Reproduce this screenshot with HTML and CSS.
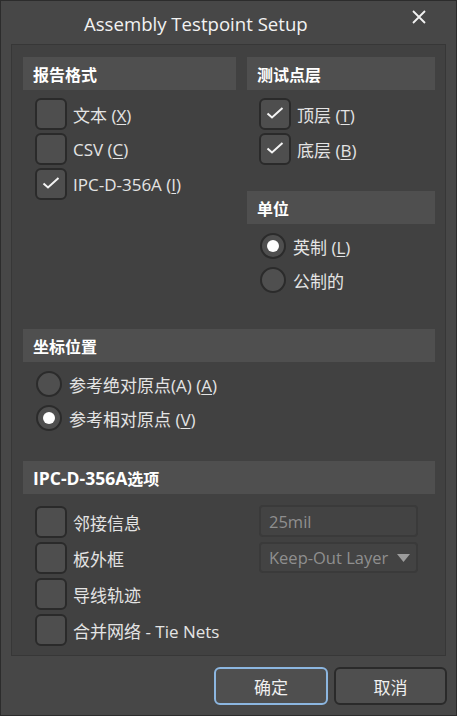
FILE: index.html
```html
<!DOCTYPE html>
<html lang="zh">
<head>
<meta charset="utf-8">
<title>Assembly Testpoint Setup</title>
<link rel="stylesheet" href="styles.css">
</head>
<body>
<div class="window">
  <div class="titlebar">
    <span class="title">Assembly Testpoint Setup</span>
    <span class="close"><svg width="14" height="14" viewBox="0 0 14 14"><path d="M1 1 L13 13 M13 1 L1 13" stroke="#f2f2f2" stroke-width="1.8" fill="none"/></svg></span>
  </div>
  <div class="panel">
    <div class="top">
      <div class="col">
        <div class="hdr">报告格式</div>
        <div class="list tight">
          <div class="opt"><span class="cb"></span><span>文本 (<u>X</u>)</span></div>
          <div class="opt"><span class="cb"></span><span>CSV (<u>C</u>)</span></div>
          <div class="opt"><span class="cb checked"><svg width="32" height="32" viewBox="0 0 32 32"><path d="M8.5 15.5 L13 19.5 L23.5 10" stroke="#f4f4f4" stroke-width="2" fill="none"/></svg></span><span>IPC-D-356A (<u>I</u>)</span></div>
        </div>
      </div>
      <div class="col">
        <div class="hdr">测试点层</div>
        <div class="list tight">
          <div class="opt"><span class="cb checked"><svg width="32" height="32" viewBox="0 0 32 32"><path d="M8.5 15.5 L13 19.5 L23.5 10" stroke="#f4f4f4" stroke-width="2" fill="none"/></svg></span><span>顶层 (<u>T</u>)</span></div>
          <div class="opt"><span class="cb checked"><svg width="32" height="32" viewBox="0 0 32 32"><path d="M8.5 15.5 L13 19.5 L23.5 10" stroke="#f4f4f4" stroke-width="2" fill="none"/></svg></span><span>底层 (<u>B</u>)</span></div>
        </div>
        <div class="hdr unit">单位</div>
        <div class="list radios">
          <div class="opt"><span class="rb on"></span><span>英制 (<u>L</u>)</span></div>
          <div class="opt"><span class="rb"></span><span>公制的</span></div>
        </div>
      </div>
    </div>
    <div class="hdr coord">坐标位置</div>
    <div class="list radios">
      <div class="opt"><span class="rb"></span><span>参考绝对原点(A) (<u>A</u>)</span></div>
      <div class="opt"><span class="rb on"></span><span>参考相对原点 (<u>V</u>)</span></div>
    </div>
    <div class="hdr ipc"><span class="lat">IPC-D-356A</span>选项</div>
    <div class="ipcgrid">
      <div class="list wide">
        <div class="opt"><span class="cb"></span><span>邻接信息</span></div>
        <div class="opt"><span class="cb"></span><span>板外框</span></div>
        <div class="opt"><span class="cb"></span><span>导线轨迹</span></div>
        <div class="opt"><span class="cb"></span><span>合并网络 - Tie Nets</span></div>
      </div>
      <div class="fields">
        <div class="field">25mil</div>
        <div class="field select"><span>Keep-Out Layer</span><svg width="13" height="8" viewBox="0 0 13 8"><path d="M0 0 H13 L6.5 8 Z" fill="#9c9c9c"/></svg></div>
      </div>
    </div>
  </div>
  <div class="buttons">
    <div class="btn primary">确定</div>
    <div class="btn">取消</div>
  </div>
</div>
</body>
</html>
```

FILE: styles.css
```css
* { box-sizing: border-box; }
html, body { margin: 0; padding: 0; }
body {
  background: #474747;
  font-family: "Open Sans", "Noto Sans CJK SC", sans-serif;
  color: #e4e4e4;
}
.window {
  width: 457px;
  height: 716px;
  border: 1px solid #2c2c2c;
  background: #474747;
  display: flex;
  flex-direction: column;
}
.titlebar {
  height: 43px;
  display: flex;
  align-items: center;
  position: relative;
}
.title {
  padding-left: 83px;
  font-size: 18.6px;
  color: #f2f2f2;
  margin-top: 1px;
}
.close {
  position: absolute;
  left: 411px;
  top: 9px;
  width: 14px;
  height: 14px;
  display: flex;
}
.panel {
  margin-left: 10px;
  width: 435px;
  height: 612px;
  border: 1px solid #373737;
  background: #414141;
  padding: 12px 10px 0 11px;
  overflow: hidden;
}
.top {
  display: grid;
  grid-template-columns: 213px 188px;
  column-gap: 11px;
}
.hdr {
  height: 33px;
  background: #4f4f4f;
  color: #ffffff;
  font-weight: bold;
  font-size: 16px;
  display: flex;
  align-items: center;
  padding-left: 10px;
}
.hdr .lat { font-size: 17.5px; }
.hdr.unit { margin-top: 26px; }
.hdr.coord { margin-top: 36px; }
.hdr.ipc { margin-top: 30px; }
.list {
  display: flex;
  flex-direction: column;
  gap: 3px;
  padding-left: 12px;
  margin-top: 8px;
}
.list.radios {
  gap: 8px;
  margin-top: 9px;
  padding-left: 13px;
}
.list.wide {
  gap: 4px;
  margin-top: 12px;
}
.opt {
  display: flex;
  align-items: center;
  font-size: 17px;
  color: #e4e4e4;
  white-space: nowrap;
}
.opt u { text-decoration-thickness: 1px; text-underline-offset: 2px; }
.cb {
  width: 32px;
  height: 32px;
  border: 2px solid #2a2a2a;
  border-radius: 6px;
  background: #4e4e4e;
  margin-right: 6px;
  flex: none;
  position: relative;
}
.cb svg { position: absolute; left: -2px; top: -2px; }
.rb {
  width: 26px;
  height: 26px;
  border: 2px solid #2b2b2b;
  border-radius: 50%;
  background: #4f4f4f;
  margin-right: 7px;
  flex: none;
  display: flex;
  align-items: center;
  justify-content: center;
}
.rb.on::after {
  content: "";
  width: 12px;
  height: 12px;
  border-radius: 50%;
  background: #ffffff;
}
.ipcgrid {
  display: grid;
  grid-template-columns: 236px 159px;
}
.fields {
  display: flex;
  flex-direction: column;
  gap: 5px;
  margin-top: 11px;
}
.field {
  width: 159px;
  height: 32px;
  border: 2px solid #3a3a3a;
  border-radius: 4px;
  background: #434343;
  color: #8f8f8f;
  font-size: 16.5px;
  display: flex;
  align-items: center;
  padding-left: 8px;
}
.field.select {
  height: 31px;
  justify-content: space-between;
  padding-right: 6px;
}
.buttons {
  display: flex;
  justify-content: flex-end;
  gap: 6px;
  padding-right: 9px;
  margin-top: 11px;
}
.btn {
  width: 113px;
  height: 38px;
  border: 2px solid #2a2a2a;
  border-radius: 6px;
  background: #4f4f4f;
  color: #f0f0f0;
  font-size: 17px;
  display: flex;
  align-items: center;
  justify-content: center;
}
.btn.primary {
  width: 114px;
  border-color: #8cb6e0;
}
```
